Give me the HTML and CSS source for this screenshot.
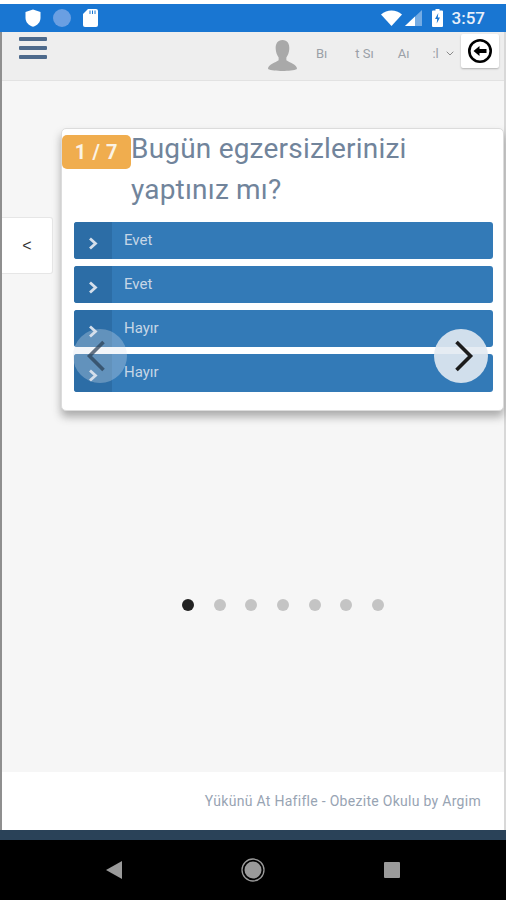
FILE: index.html
```html
<!DOCTYPE html>
<html lang="tr">
<head>
<meta charset="utf-8">
<title>Obezite Okulu</title>
<link rel="stylesheet" href="styles.css">
</head>
<body>
<div class="phone">
  <div class="topline"></div>
  <div class="status">
    <div class="status-left">
      <svg class="ic-shield" viewBox="0 0 16 18" width="16" height="18"><path d="M8 0.5 L15.5 3 V9 C15.5 13.5 12 16.5 8 17.8 C4 16.5 0.5 13.5 0.5 9 V3 Z" fill="#fff"/></svg>
      <span class="status-dot"></span>
      <svg class="ic-sd" viewBox="0 0 15 18" width="15" height="18"><path d="M5 0 H13 A2 2 0 0 1 15 2 V16 A2 2 0 0 1 13 18 H2 A2 2 0 0 1 0 16 V5 Z" fill="#fff"/><path d="M7 1.5V5M9.5 1.5V5M12 1.5V5" stroke="#1976d2" stroke-width="1"/></svg>
    </div>
    <div class="status-right">
      <svg class="ic-wifi" viewBox="0 0 21 16" width="21" height="16"><path d="M0 4.5 C6 -1 15 -1 21 4.5 L10.5 16 Z" fill="#fff"/></svg>
      <svg class="ic-signal" viewBox="0 0 17 16" width="17" height="16"><path d="M0 16 L17 0 V16 Z" fill="#fff" opacity=".4"/><path d="M0 16 L10 6.6 V16 Z" fill="#fff"/></svg>
      <svg class="ic-batt" viewBox="0 0 11 18" width="11" height="18"><path d="M3.5 0 H7.5 V1.5 H10 A1 1 0 0 1 11 2.5 V17 A1 1 0 0 1 10 18 H1 A1 1 0 0 1 0 17 V2.5 A1 1 0 0 1 1 1.5 H3.5 Z" fill="#fff"/><path d="M6.3 4 L3 10 H5.2 L4.7 14.5 L8 8.5 H5.8 Z" fill="#1976d2"/></svg>
      <span class="clock">3:57</span>
    </div>
  </div>

  <header class="topbar">
    <div class="burger"><i></i><i></i><i></i></div>
    <svg class="avatar" viewBox="0 0 30 32" width="29" height="31"><path d="M15 0 C20 0 22.5 4 22 9.500 C21.700 13 20.500 16 19 18 V21 C22 23.500 30 25 30 30 C27 31.500 21 32 15 32 C9 32 3 31.500 0 30 C0 25 8 23.500 11 21 V18 C9.500 16 8.300 13 8 9.500 C7.500 4 10 0 15 0 Z" fill="#a9a9a9"/></svg>
    <nav class="user">
      <span class="u1">Bı</span>
      <span class="u2">t Sı</span>
      <span class="u3">Aı</span>
      <span class="u4">:l</span>
      <svg class="chev" viewBox="0 0 8 5" width="8" height="5"><path d="M0.700 0.700 L4 4 L7.300 0.700" fill="none" stroke="#8a8a8a" stroke-width="1"/></svg>
    </nav>
    <button class="back" type="button" aria-label="Geri">
      <svg viewBox="0 0 26 26" width="26" height="26"><circle cx="13" cy="13" r="10.700" fill="none" stroke="#000" stroke-width="2.600"/><path d="M6.500 13 L12.500 8 V11 H19.500 V15 H12.500 V18 Z" fill="#000"/></svg>
    </button>
  </header>

  <main class="content">
    <div class="stage">
      <button class="side" type="button">&lt;</button>
      <section class="card">
        <div class="badge">1 / 7</div>
        <h1 class="question">Bugün egzersizlerinizi<br>yaptınız mı?</h1>
        <ul class="answers">
          <li class="answer"><span class="answer-ic"><svg viewBox="0 0 10 13" width="10" height="13"><path d="M2 1.500 L7.500 6.500 L2 11.500" fill="none" stroke="#d5dfeb" stroke-width="2.800"/></svg></span><span class="answer-t">Evet</span></li>
          <li class="answer"><span class="answer-ic"><svg viewBox="0 0 10 13" width="10" height="13"><path d="M2 1.500 L7.500 6.500 L2 11.500" fill="none" stroke="#d5dfeb" stroke-width="2.800"/></svg></span><span class="answer-t">Evet</span></li>
          <li class="answer"><span class="answer-ic"><svg viewBox="0 0 10 13" width="10" height="13"><path d="M2 1.500 L7.500 6.500 L2 11.500" fill="none" stroke="#d5dfeb" stroke-width="2.800"/></svg></span><span class="answer-t">Hayır</span></li>
          <li class="answer answer-last"><span class="answer-ic"><svg viewBox="0 0 10 13" width="10" height="13"><path d="M2 1.500 L7.500 6.500 L2 11.500" fill="none" stroke="#d5dfeb" stroke-width="2.800"/></svg></span><span class="answer-t">Hayır</span></li>
        </ul>
        <button class="arrow arrow-prev" type="button" aria-label="Önceki"><svg viewBox="0 0 20 32" width="20" height="32"><path d="M17.500 2 L3.500 16 L17.500 30" fill="none" stroke="#2a3f55" stroke-width="3.600" opacity=".72"/></svg></button>
        <button class="arrow arrow-next" type="button" aria-label="Sonraki"><svg viewBox="0 0 20 32" width="20" height="32"><path d="M2.500 2 L16.500 16 L2.500 30" fill="none" stroke="#1c1c1c" stroke-width="3.600"/></svg></button>
      </section>
    </div>
    <div class="dots">
      <span class="dot on"></span><span class="dot"></span><span class="dot"></span><span class="dot"></span><span class="dot"></span><span class="dot"></span><span class="dot"></span>
    </div>
  </main>

  <footer class="foot">Yükünü At Hafifle - Obezite Okulu by Argim</footer>
  <div class="darkbar"></div>
  <div class="navbar">
    <svg viewBox="0 0 16 18" width="16" height="18"><path d="M16 0 V18 L0 9 Z" fill="#9a9a9a"/></svg>
    <svg viewBox="0 0 24 24" width="24" height="24"><circle cx="12" cy="12" r="11" fill="none" stroke="#9a9a9a" stroke-width="1.300"/><circle cx="12" cy="12" r="8.500" fill="#9a9a9a"/></svg>
    <span class="nav-sq"></span>
  </div>
</div>
</body>
</html>
```
FILE: styles.css
```css
* { box-sizing: border-box; }
html, body { margin: 0; padding: 0; }
body { width: 506px; height: 900px; overflow: hidden; background: #fff; font-family: Roboto, "Liberation Sans", sans-serif; }
.phone { width: 506px; height: 900px; display: flex; flex-direction: column; border-left: 2px solid #8f8f8f; border-right: 2px solid #d8d8d8; }

.topline { height: 4px; background: #fff; margin: 0 -2px; }
.status { height: 28px; margin: 0 -2px; background: #1976d2; display: flex; align-items: center; justify-content: space-between; padding: 0 21px 0 25px; color: #fff; }
.status-left { display: flex; align-items: center; gap: 12px; }
.status-dot { width: 18px; height: 18px; border-radius: 50%; background: #6a9fe2; }
.status-right { display: flex; align-items: center; }
.ic-signal { margin-left: 3px; }
.ic-batt { margin-left: 10px; }
.clock { margin-left: 9px; font-size: 17px; font-weight: 500; color: #e8f0fa; }

.topbar { height: 49px; background: #eee; border-bottom: 1px solid #e2e2e2; display: flex; align-items: flex-start; position: relative; }
.burger { width: 28px; margin: 5px 0 0 17px; display: flex; flex-direction: column; gap: 5px; }
.burger i { display: block; height: 4px; background: #4d6a8c; border-radius: 1px; }
.avatar { margin: 8px 0 0 221px; }
.user { margin: 13px 0 0 19px; width: 145px; height: 16px; position: relative; display: flex; align-items: center; font-size: 13px; color: #9aa0a7; }
.u2 { margin-left: 28px; }
.u3 { margin-left: 24px; }
.u4 { margin-left: 23px; }
.chev { margin-left: 7px; }
.back { position: absolute; left: 459px; top: 2px; width: 38px; height: 34px; padding: 0; background: #fff; border: 0; border-radius: 2px; box-shadow: 0 1px 2px rgba(0,0,0,.25); display: flex; align-items: center; justify-content: center; }

.content { flex: 1; background: #f6f6f6; padding-top: 47px; min-height: 0; }
.stage { display: flex; align-items: flex-start; }
.side { width: 51px; height: 57px; margin-top: 89px; background: #fff; border: 1px solid #e6e6e6; border-left: 0; border-radius: 0 3px 3px 0; font-family: "Liberation Sans", sans-serif; font-size: 16px; color: #333; padding: 0; }
.card { width: 443px; height: 283px; margin-left: 8px; position: relative; background: #fff; border: 1px solid #dcdcdc; border-radius: 5px; padding: 0 10px 0 12px; box-shadow: 0 6px 8px rgba(60,60,60,.4); }
.badge { position: absolute; left: 0; top: 6px; width: 69px; height: 34px; background: #f0ad4e; border-radius: 5px; color: #fbf3e4; font-size: 20px; font-weight: 700; letter-spacing: .6px; display: flex; align-items: center; justify-content: center; }
.question { margin: -1px 0 0 57px; font-size: 28px; font-weight: 400; line-height: 41px; letter-spacing: .2px; color: #71849b; height: 94px; white-space: nowrap; }
.answers { list-style: none; margin: 0; padding: 0; display: flex; flex-direction: column; gap: 7px; }
.answer { height: 37px; background: #337ab7; border-radius: 3px; display: flex; align-items: stretch; color: #c6d6e6; font-size: 15px; overflow: hidden; }
.answer-last { height: 38px; }
.answer-ic { width: 38px; background: #2c6da6; display: flex; align-items: center; justify-content: center; padding-top: 5px; }
.answer-t { margin-left: 12px; padding-top: 9px; }
.arrow { position: absolute; top: 200px; width: 54px; height: 54px; border-radius: 50%; border: 0; padding: 0; display: flex; align-items: center; justify-content: center; }
.arrow-prev { left: 11px; background: rgba(215,225,235,.32); }
.arrow-prev svg { margin-left: -8px; }
.arrow-next { left: 372px; background: rgba(226,234,242,.9); }
.arrow-next svg { margin-left: 6px; }

.dots { margin-top: 188px; padding-left: 180px; display: flex; gap: 19.700px; }
.dot { width: 12px; height: 12px; border-radius: 50%; background: #c4c4c4; }
.dot.on { background: #222; }

.foot { height: 58px; background: #fff; text-align: right; padding: 21px 23px 0 0; font-size: 14px; line-height: 16px; letter-spacing: .29px; color: #98a4b3; }
.darkbar { height: 10px; margin: 0 -2px; background: #2a4258; }
.navbar { height: 60px; margin: 0 -2px; background: #000; display: flex; align-items: center; padding: 0 106px 0 106px; justify-content: space-between; }
.nav-sq { width: 16px; height: 16px; border-radius: 1px; background: #9a9a9a; }
```
